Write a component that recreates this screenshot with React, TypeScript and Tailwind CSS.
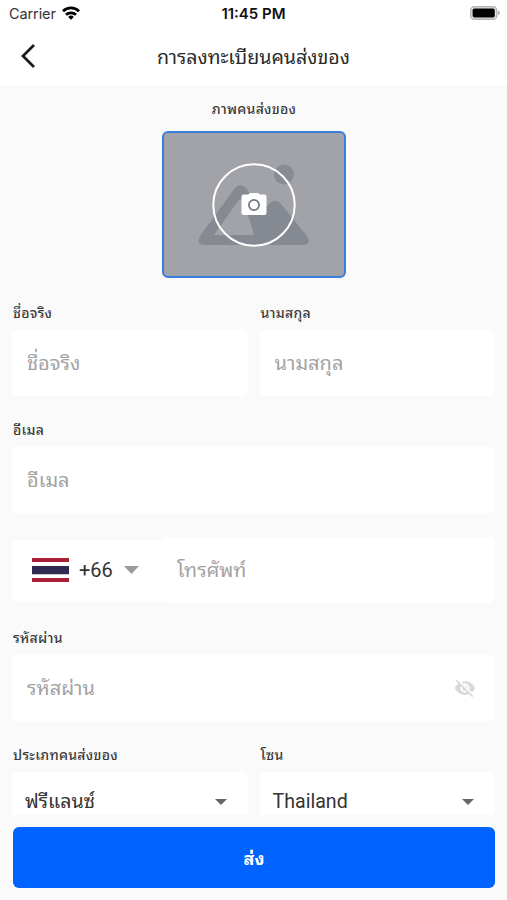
import { clsx } from "clsx";
import { MdVisibilityOff } from "react-icons/md";

function Label({ children, className }: { children: string; className?: string }) {
  return (
    <p className={clsx("h-6 whitespace-nowrap pl-px text-[14px] font-medium leading-6 tracking-[0.25px] text-[#3c3c3c]", className)}>
      {children}
    </p>
  );
}

function Field({ placeholder, className }: { placeholder: string; className?: string }) {
  return (
    <div className={clsx("flex h-[66px] items-center rounded-md bg-white pl-[15px] text-[20px] text-[#a3a3a3]", className)}>
      {placeholder}
    </div>
  );
}

function Caret({ className }: { className?: string }) {
  return (
    <svg viewBox="0 0 12 7" preserveAspectRatio="none" className={className} fill="currentColor">
      <path d="M0 0h12L6 7z" />
    </svg>
  );
}

function StatusBar() {
  return (
    <div className="grid h-7 grid-cols-3 items-center pl-[9px] pr-[7px] font-[Inter,sans-serif]">
      <div className="flex items-center gap-1.5">
        <span className="text-[14.5px] tracking-[-0.1px] text-[#333]">Carrier</span>
        <svg viewBox="0 0 18 14" className="-mt-0.5 h-[14px] w-[18px]" fill="none" stroke="#000" strokeWidth="2.8">
          <path d="M1 5.2a11.5 11.5 0 0 1 16 0" />
          <path d="M4 8.8a7.2 7.2 0 0 1 10 0" />
          <path d="M9 13.8l-2.8-2.9a4.1 4.1 0 0 1 5.6 0z" fill="#000" stroke="none" />
        </svg>
      </div>
      <span className="whitespace-nowrap pr-0.5 text-center text-[15px] font-semibold text-[#111]">11:45 PM</span>
      <svg viewBox="0 0 30 14" className="-mt-0.5 h-[14px] w-[30px] justify-self-end">
        <rect x="0.7" y="0.7" width="26" height="12.6" rx="3.6" fill="#e4e4e4" stroke="#b5b5b5" strokeWidth="1.4" />
        <rect x="2.6" y="2.5" width="22.2" height="9" rx="1.8" fill="#000" />
        <path d="M28 4.8c2.4.6 2.4 3.8 0 4.4z" fill="#aaa" />
      </svg>
    </div>
  );
}

function PhotoPicker() {
  return (
    <div className="h-[147px] w-[184px] overflow-hidden rounded-md border-2 border-[#3b7ddd] bg-[#a1a3a9]">
      <svg viewBox="0 0 180 143" className="h-full w-full">
        <circle cx="120" cy="41.5" r="10" fill="#878c93" />
        <path
          d="M71 55L36 103Q32 112 40 112H139Q148 112 143 103L117 71Q111 64 105 71L98 79L82 55Q76 49 71 55ZM74 68Q76 65 78 68L86 88L90 102H50Z"
          fill="#858a92"
          fillRule="evenodd"
        />
        <circle cx="90" cy="72" r="40.7" fill="none" stroke="#fff" strokeWidth="2" />
        <path
          d="M79.5 61.5H84L86 60H94L96 61.5H100.5Q102.5 61.5 102.5 63.5V80Q102.5 82 100.5 82H79.5Q77.5 82 77.5 80V63.5Q77.5 61.5 79.5 61.5Z"
          fill="#fff"
        />
        <circle cx="90" cy="72" r="5.1" fill="#fff" stroke="#777b82" strokeWidth="1.8" />
      </svg>
    </div>
  );
}

function ThaiFlag() {
  return (
    <svg viewBox="0 0 37 24" className="h-6 w-[37px]">
      <path d="M0 0h37v4H0zM0 20h37v4H0z" fill="#a71f38" />
      <path d="M0 8h37v8.3H0z" fill="#2f2b50" />
    </svg>
  );
}

function Select({ label, value }: { label: string; value: string }) {
  return (
    <div>
      <Label>{label}</Label>
      <div className="mt-[5px] flex h-[59px] items-center justify-between rounded-md bg-white pl-[13px] pr-[21px] text-[19.6px] text-[#333]">
        {value}
        <Caret className="h-[6px] w-3 text-[#666]" />
      </div>
    </div>
  );
}

export default function App() {
  return (
    <div className="flex h-[900px] w-[507px] flex-col overflow-hidden bg-[#fafafa] font-['Roboto','Noto_Sans_Thai_Looped','Noto_Sans_Thai',sans-serif]">
      <header className="h-[85px] shrink-0 bg-white">
        <StatusBar />
        <div className="grid h-[57px] grid-cols-[60px_1fr_60px] items-center">
          <svg viewBox="0 0 16 26" className="-mt-0.5 ml-5 h-[26px] w-4" fill="none" stroke="#1c1c1c" strokeWidth="2.8">
            <path d="M14 2L3 13l11 11" />
          </svg>
          <h1 className="pt-[3px] text-center text-[19.6px] text-[#2b2b2b]">การลงทะเบียนคนส่งของ</h1>
        </div>
      </header>

      <main className="flex h-[730px] shrink-0 flex-col overflow-hidden px-3">
        <Label className="mt-3 text-center">ภาพคนส่งของ</Label>
        <div className="mt-[10px] flex justify-center">
          <PhotoPicker />
        </div>

        <div className="mt-[23px] grid grid-cols-2 gap-x-3">
          <div>
            <Label>ชื่อจริง</Label>
            <Field placeholder="ชื่อจริง" className="mt-[5px]" />
          </div>
          <div>
            <Label>นามสกุล</Label>
            <Field placeholder="นามสกุล" className="mt-[5px]" />
          </div>
        </div>

        <Label className="mt-[22px]">อีเมล</Label>
        <Field placeholder="อีเมล" className="mt-[5px] shrink-0" />

        <div className="mt-6 flex shrink-0 items-center">
          <div className="flex h-[61px] w-[150px] items-center rounded-l-md bg-white pl-5">
            <ThaiFlag />
            <span className="ml-[10px] w-[45px] text-[20px] text-[#333]">+66</span>
            <Caret className="h-2 w-[15px] text-[#9b9b9b]" />
          </div>
          <Field placeholder="โทรศัพท์" className="flex-1" />
        </div>

        <Label className="mt-[23px]">รหัสผ่าน</Label>
        <div className="mt-[5px] flex h-[66px] shrink-0 items-center justify-between rounded-md bg-white pl-[15px] pr-[19px]">
          <span className="text-[20px] text-[#a3a3a3]">รหัสผ่าน</span>
          <MdVisibilityOff size={22} className="text-[#d9d9d9]" />
        </div>

        <div className="mt-[22px] grid grid-cols-2 gap-x-3">
          <Select label="ประเภทคนส่งของ" value="ฟรีแลนซ์" />
          <Select label="โซน" value="Thailand" />
        </div>
      </main>

      <button className="ml-[13px] mt-3 h-[61px] w-[482px] shrink-0 rounded-md bg-[#0062ff] pt-px text-[18px] font-bold text-white">
        ส่ง
      </button>
    </div>
  );
}
